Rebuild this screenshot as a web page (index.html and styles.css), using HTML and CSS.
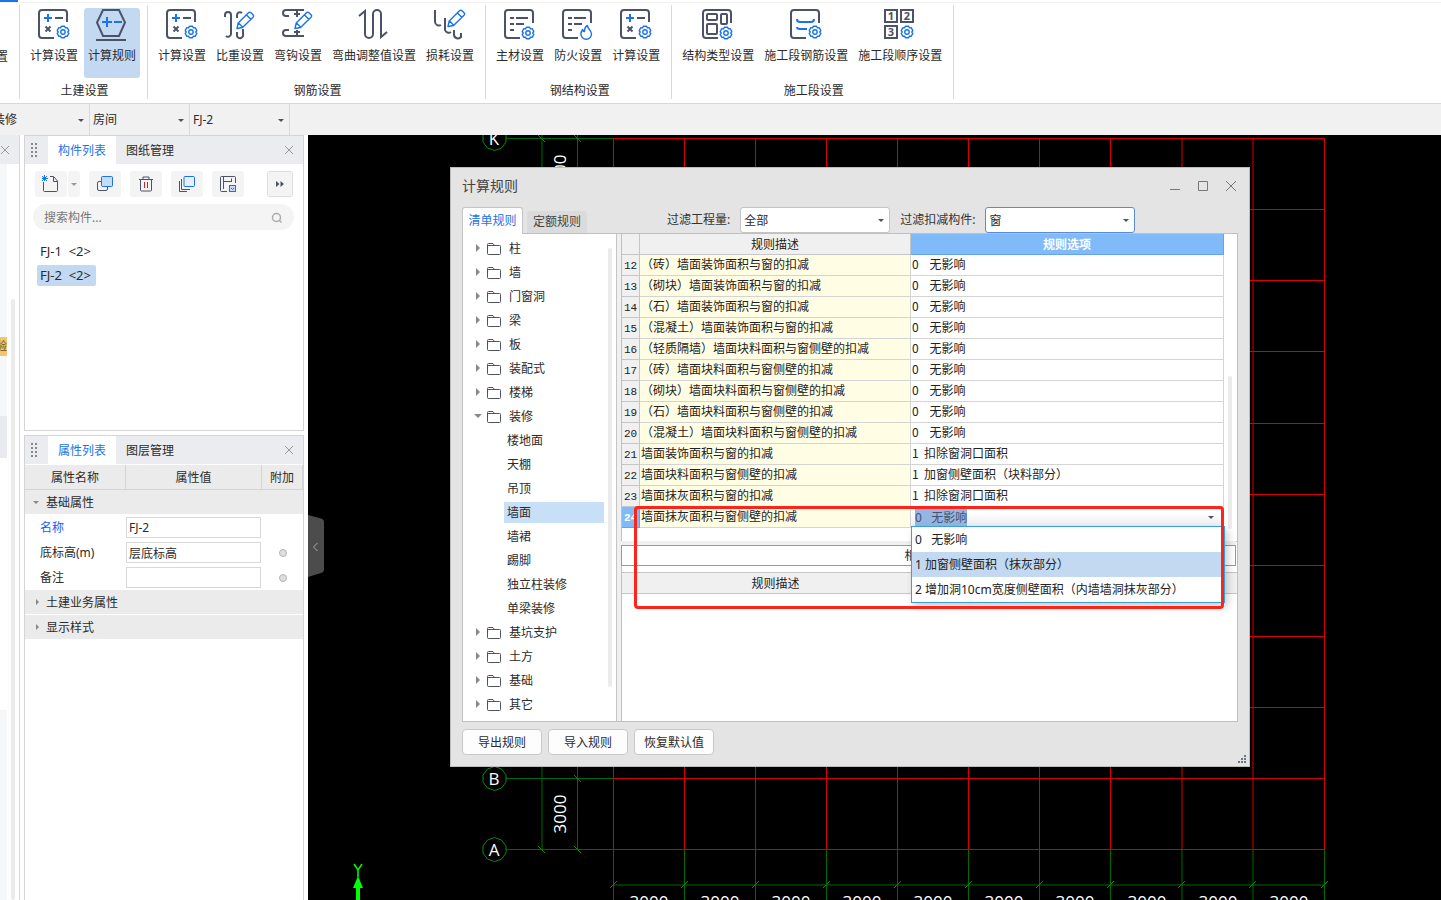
FILE: index.html
```html
<!DOCTYPE html>
<html lang="zh-CN">
<head>
<meta charset="utf-8">
<title>计算规则</title>
<link rel="stylesheet" href="styles.css">
</head>
<body>
<svg class="defs" aria-hidden="true">
  <symbol id="gear" viewBox="-7 -7 14 14"><path d="M-1.6-5.8H1.6L2.4-4.1 4.3-4.2 5.8-1.5 4.8 0 5.8 1.5 4.3 4.2 2.4 4.1 1.6 5.8H-1.6L-2.4 4.1-4.3 4.2-5.8 1.5-4.8 0-5.8-1.5-4.3-4.2-2.4-4.1Z"/><circle r="2.2"/></symbol>
  <symbol id="pencil" viewBox="0 0 19 19"><path d="M1 17.5L2.2 12 12.5 1.8a1.8 1.8 0 0 1 2.5 0L17 3.800a1.800 1.800 0 0 1 0 2.500L6.500 16.500ZM10.500 4l4.300 4.300M2.500 12l4 4"/></symbol>
  <symbol id="calc" viewBox="0 0 32 32"><path class="ink" d="M29 13V4a3 3 0 0 0-3-3H4a3 3 0 0 0-3 3v22a3 3 0 0 0 3 3h12M17 9h8M7.500 17.500l5 5M12.500 17.500l-5 5"/><path class="blue" d="M6 9h8M10 5v8"/><use class="thin" href="#gear" x="18" y="16" width="14" height="14"/></symbol>
  <symbol id="folder" viewBox="0 0 16 14"><path d="M1.500 11.500v-9a1 1 0 0 1 1-1h4.500l1.500 2h5a1 1 0 0 1 1 1v7a1 1 0 0 1-1 1h-11a1 1 0 0 1-1-1zM1.500 3.500H9"/></symbol>
  <symbol id="cross" viewBox="0 0 10 10"><path d="M1 1l8 8M9 1L1 9"/></symbol>
  <symbol id="grip" viewBox="0 0 6 14"><path d="M0 0h2v2H0zM4 0h2v2H4zM0 4h2v2H0zM4 4h2v2H4zM0 8h2v2H0zM4 8h2v2H4zM0 12h2v2H0zM4 12h2v2H4z"/></symbol>
</svg>

<header class="ribbon">
  <section class="group group-cut"><span class="cut-label">置</span></section>
  <section class="group">
    <div class="tools">
      <button class="tool"><svg viewBox="0 0 32 32"><use href="#calc"/></svg>计算设置</button>
      <button class="tool active"><svg viewBox="0 0 32 32"><path class="ink" d="M7 1h16l6 12.500L23 27H7L1 13.500zM0 31h30"/><path class="blue" d="M6 13h10M11 8v10M18 13h8"/></svg>计算规则</button>
    </div>
    <h2>土建设置</h2>
  </section>
  <section class="group">
    <div class="tools">
      <button class="tool"><svg viewBox="0 0 32 32"><use href="#calc"/></svg>计算设置</button>
      <button class="tool"><svg viewBox="0 0 32 32"><path class="ink" d="M1 8V6a3 3 0 0 1 6 0v19a3 3 0 0 1-5 2M13 9V6a3 3 0 0 1 5-2M19 20v5a3 3 0 0 1-6 2v-4"/><use class="thin" href="#pencil" x="12" y="2" width="19" height="19"/></svg>比重设置</button>
      <button class="tool"><svg viewBox="0 0 32 32"><path class="ink" d="M22 1H4a3 3 0 0 0-3 3 3 3 0 0 0 3 3h3M7 21H4a3 3 0 0 0 0 6h18M15 2v6M12 5h6M15 21v5M12 23h6"/><use class="thin" href="#pencil" x="12" y="2" width="19" height="19"/></svg>弯钩设置</button>
      <button class="tool"><svg viewBox="0 0 32 32"><path class="ink" d="M1 7l6-5v23a4 4 0 0 0 8 0V5a4 4 0 0 1 8 0v23l6-5"/></svg>弯曲调整值设置</button>
      <button class="tool"><svg viewBox="0 0 32 32"><path class="ink" d="M1 1v12a4 4 0 0 0 6 3M11 9v12a4 4 0 0 0 6 2M20 21v5a4 4 0 0 0 7 2v-4"/><use class="thin" href="#pencil" x="13" y="0" width="19" height="19"/></svg>损耗设置</button>
    </div>
    <h2>钢筋设置</h2>
  </section>
  <section class="group">
    <div class="tools">
      <button class="tool"><svg viewBox="0 0 32 32"><path class="ink" d="M29 14V4a3 3 0 0 0-3-3H4a3 3 0 0 0-3 3v22a3 3 0 0 0 3 3h12M6 9h4M12 9h12M6 15h4M12 15h8M6 21h4"/><use class="thin" href="#gear" x="17" y="17" width="14" height="14"/></svg>主材设置</button>
      <button class="tool"><svg viewBox="0 0 32 32"><path class="ink" d="M29 14V4a3 3 0 0 0-3-3H4a3 3 0 0 0-3 3v22a3 3 0 0 0 3 3h12M6 9h4M12 9h12M6 15h4M12 15h8M6 21h4"/><path class="thin" d="M25.500 16.500c-.5 3 4 4.500 4 8.500a5.300 5.300 0 0 1-10.600 0c0-2 1-3.500 1.700-4.500.3 1.500 1 2 1.900 2 0-3 1-5 3-6z"/></svg>防火设置</button>
      <button class="tool"><svg viewBox="0 0 32 32"><use href="#calc"/></svg>计算设置</button>
    </div>
    <h2>钢结构设置</h2>
  </section>
  <section class="group">
    <div class="tools">
      <button class="tool"><svg viewBox="0 0 32 32"><path class="ink" d="M29 14V4a3 3 0 0 0-3-3H4a3 3 0 0 0-3 3v22a3 3 0 0 0 3 3h12M6 5h8a1 1 0 0 1 1 1v4a1 1 0 0 1-1 1H6a1 1 0 0 1-1-1V6a1 1 0 0 1 1-1zM20 5h4a1 1 0 0 1 1 1v8a1 1 0 0 1-1 1h-4a1 1 0 0 1-1-1V6a1 1 0 0 1 1-1zM6 15h8a1 1 0 0 1 1 1v8a1 1 0 0 1-1 1H6a1 1 0 0 1-1-1v-8a1 1 0 0 1 1-1z"/><use class="thin" href="#gear" x="17" y="17" width="14" height="14"/></svg>结构类型设置</button>
      <button class="tool"><svg viewBox="0 0 32 32"><path class="ink" d="M29 14V4a3 3 0 0 0-3-3H4a3 3 0 0 0-3 3v22a3 3 0 0 0 3 3h12"/><path class="blue" d="M7 10q0 3 3 3h11q3 0 3-3M7 18q0 2 3 2h7"/><use class="thin" href="#gear" x="18" y="16" width="14" height="14"/></svg>施工段钢筋设置</button>
      <button class="tool"><svg viewBox="0 0 32 32"><path class="ink" d="M1 1h12v12H1zM17 1h12v12H17zM1 17h12v12H1z"/><text x="7" y="11">1</text><text x="23" y="11">2</text><text x="7" y="27">3</text><use class="thin" href="#gear" x="16" y="16" width="14" height="14"/></svg>施工段顺序设置</button>
    </div>
    <h2>施工段设置</h2>
  </section>
</header>

<nav class="scope-bar">
  <label class="combo"><select aria-label="构件大类"><option>装修</option></select></label>
  <label class="combo"><select aria-label="构件类型"><option>房间</option></select></label>
  <label class="combo"><select aria-label="构件"><option>FJ-2</option></select></label>
</nav>

<main class="workspace">
  <aside class="nav-strip">
    <div class="strip-head"><svg class="cross"><use href="#cross"/></svg></div>
    <div class="strip-body">
      <div class="strip-col"><span class="strip-badge">验</span><span class="strip-band"></span><span class="strip-blank"></span></div>
      <div class="strip-scroll"></div>
    </div>
  </aside>

  <div class="panels">
    <section class="panel list-panel">
      <div class="panel-head">
        <svg class="grip"><use href="#grip"/></svg>
        <button class="tab on">构件列表</button><button class="tab">图纸管理</button>
        <button class="close" aria-label="关闭"><svg class="cross"><use href="#cross"/></svg></button>
      </div>
      <div class="toolbar">
        <div class="split">
          <button aria-label="新建"><svg viewBox="0 0 18 18"><path class="ink" d="M1.500 7v8.500a1 1 0 0 0 1 1h12a1 1 0 0 0 1-1V6l-4-4.500H8M11.500 2v4.500H15"/><path class="blue" d="M0 1l5 5M5 1L0 6M2.500 0v6M0 3.500h6"/></svg></button>
          <button class="drop" aria-label="更多新建"></button>
        </div>
        <button aria-label="复制"><svg viewBox="0 0 18 18"><path class="ink" d="M5 6.500H3a1.500 1.500 0 0 0-1.500 1.500v6A1.500 1.500 0 0 0 3 15.500h7a1.500 1.500 0 0 0 1.500-1.500v-2"/><rect class="fill" x="5.500" y="1.500" width="11" height="10" rx="1"/></svg></button>
        <button aria-label="删除"><svg viewBox="0 0 18 18"><path class="ink" d="M2 4.500h14M6 4V2h6v2M3.500 5v10a1 1 0 0 0 1 1h9a1 1 0 0 0 1-1V5"/><path class="red" d="M7.500 7v6M10.500 7v6"/></svg></button>
        <button aria-label="层间复制"><svg viewBox="0 0 18 18"><path class="ink" d="M3.500 4v10.500H12M1.500 6v10.500H9"/><rect class="fill pale" x="6" y="1.500" width="10.500" height="10" rx="1"/></svg></button>
        <button aria-label="存档"><svg viewBox="0 0 18 18"><path class="ink" d="M16.500 8V2.500a1 1 0 0 0-1-1h-13a1 1 0 0 0-1 1v13a1 1 0 0 0 1 1H8M4.500 2v12M4.500 6.500H13M12.500 3.500V7"/><rect class="fill" x="10.500" y="10.500" width="6" height="6"/><path class="blue" d="M12 13l1.500 1.500L15 13"/></svg></button>
        <button class="more" aria-label="更多"><svg viewBox="0 0 10 8"><path d="M1 1l3.500 3L1 7zM5.500 1L9 4 5.500 7z"/></svg></button>
      </div>
      <label class="search"><input type="text" placeholder="搜索构件..."><svg viewBox="0 0 12 12"><circle cx="5.500" cy="5.500" r="4"/><path d="M8.500 8.500l2 2"/></svg></label>
      <ul class="items"><li>FJ-1 &nbsp;&lt;2&gt;</li><li class="on">FJ-2 &nbsp;&lt;2&gt;</li></ul>
    </section>

    <section class="panel prop-panel">
      <div class="panel-head">
        <svg class="grip"><use href="#grip"/></svg>
        <button class="tab on">属性列表</button><button class="tab">图层管理</button>
        <button class="close" aria-label="关闭"><svg class="cross"><use href="#cross"/></svg></button>
      </div>
      <table class="props">
        <thead><tr><th class="c-name">属性名称</th><th>属性值</th><th class="c-add">附加</th></tr></thead>
        <tbody>
          <tr class="sec open"><td colspan="3">基础属性</td></tr>
          <tr><td><label class="key" for="p-name">名称</label></td><td><input id="p-name" type="text" value="FJ-2"></td><td></td></tr>
          <tr><td><label for="p-elev">底标高(m)</label></td><td><input id="p-elev" type="text" value="层底标高"></td><td><input type="radio" aria-label="附加底标高"></td></tr>
          <tr><td><label for="p-note">备注</label></td><td><input id="p-note" type="text"></td><td><input type="radio" aria-label="附加备注"></td></tr>
          <tr class="sec"><td colspan="3">土建业务属性</td></tr>
          <tr class="sec"><td colspan="3">显示样式</td></tr>
        </tbody>
      </table>
    </section>
  </div>

  <div class="canvas">
    <svg class="drawing" aria-label="轴网">
      <g transform="translate(-308 -135)">
        <path class="axis-green" d="M506 138.500H613M506 778.500H613M506 849.500H613M542 135V849M577.500 135V849M613 885H1325M613.500 849V900M684.500 849V900M755.500 849V900M826.500 849V900M897.500 849V900M968.500 849V900M1039.500 849V900M1110.500 849V900M1182 849V900M1253 849V900M1324.500 849V900"/>
        <path class="axis-red" d="M613 138.500H1325M613 209.500H1325M613 280.500H1325M613 351.500H1325M613 423.500H1325M613 494.500H1325M613 565.500H1325M613 636.500H1325M613 707.500H1325M613 778.500H1325M613 849.500H1325M613.500 138V850M684.500 138V850M755.500 138V850M826.500 138V850M897.500 138V850M968.500 138V850M1039.500 138V850M1110.500 138V850M1182 138V850M1253 138V850M1324.500 138V850"/>
        <path class="tick" d="M538 135l7 7M574 135l7 7M574 775l7 7M538 846l7 7M574 846l7 7M610 888l7-7M681 888l7-7M752 888l7-7M823 888l7-7M894 888l7-7M965 888l7-7M1036 888l7-7M1107 888l7-7M1178 888l7-7M1249 888l7-7M1321 888l7-7"/>
        <g class="bubble">
          <path d="M494.500 126.500l7 2.500 4.500 6v7l-4.500 6-7 2.500-7-2.500-4.500-6v-7l4.500-6zM494.500 766.500l7 2.500 4.500 6v7l-4.500 6-7 2.500-7-2.500-4.500-6v-7l4.500-6zM494.500 837.500l7 2.500 4.500 6v7l-4.500 6-7 2.500-7-2.500-4.500-6v-7l4.500-6z"/>
        </g>
        <g class="dims">
          <text x="494" y="145">K</text><text x="494" y="785">B</text><text x="494" y="856">A</text>
          <text transform="translate(566 174) rotate(-90)">3000</text>
          <text transform="translate(566 814) rotate(-90)">3000</text>
          <text x="649" y="908">3000</text><text x="720" y="908">3000</text><text x="791" y="908">3000</text><text x="862" y="908">3000</text><text x="933" y="908">3000</text><text x="1004" y="908">3000</text><text x="1075" y="908">3000</text><text x="1147" y="908">3000</text><text x="1218" y="908">3000</text><text x="1289" y="908">3000</text>
        </g>
        <path class="ucs" d="M358 876l5 12h-3v12h-4v-12h-3z"/>
        <path class="ucs-y" d="M354 864l4 6 4-6M358 870v7"/>
      </g>
    </svg>
    <button class="collapse" aria-label="收起"><svg viewBox="0 0 16 62"><path class="bg" d="M0 0l13 3.500a4 4 0 0 1 3 4V54a4 4 0 0 1-3 4L0 62z"/><path class="chev" d="M9.500 28L5.500 32l4 4"/></svg></button>

    <section class="dialog" role="dialog" aria-label="计算规则">
      <div class="title-bar">
        <h1>计算规则</h1>
        <button aria-label="最小化"><svg viewBox="0 0 12 12"><path d="M1 9.500h10"/></svg></button>
        <button aria-label="最大化"><svg viewBox="0 0 12 12"><path d="M1.500 1.500h9v9h-9z"/></svg></button>
        <button aria-label="关闭"><svg viewBox="0 0 12 12"><path d="M1 1l10 10M11 1L1 11"/></svg></button>
      </div>
      <div class="filter-row">
        <button class="dtab on">清单规则</button><button class="dtab">定额规则</button>
        <label class="f-label first" for="f-qty">过滤工程量:</label>
        <span class="field"><select id="f-qty"><option>全部</option></select></span>
        <label class="f-label" for="f-part">过滤扣减构件:</label>
        <span class="field focus"><select id="f-part"><option>窗</option></select></span>
      </div>
      <div class="frame">
        <div class="tree">
          <ul>
            <li><svg><use href="#folder"/></svg>柱</li>
            <li><svg><use href="#folder"/></svg>墙</li>
            <li><svg><use href="#folder"/></svg>门窗洞</li>
            <li><svg><use href="#folder"/></svg>梁</li>
            <li><svg><use href="#folder"/></svg>板</li>
            <li><svg><use href="#folder"/></svg>装配式</li>
            <li><svg><use href="#folder"/></svg>楼梯</li>
            <li class="open"><svg><use href="#folder"/></svg>装修</li>
            <li class="leaf"><span>楼地面</span></li>
            <li class="leaf"><span>天棚</span></li>
            <li class="leaf"><span>吊顶</span></li>
            <li class="leaf on"><span>墙面</span></li>
            <li class="leaf"><span>墙裙</span></li>
            <li class="leaf"><span>踢脚</span></li>
            <li class="leaf"><span>独立柱装修</span></li>
            <li class="leaf"><span>单梁装修</span></li>
            <li><svg><use href="#folder"/></svg>基坑支护</li>
            <li><svg><use href="#folder"/></svg>土方</li>
            <li><svg><use href="#folder"/></svg>基础</li>
            <li><svg><use href="#folder"/></svg>其它</li>
          </ul>
          <div class="thumb"></div>
        </div>
        <div class="rules">
          <div class="grid-wrap">
            <table class="grid">
              <thead><tr><th class="c-no"></th><th class="c-desc">规则描述</th><th class="sel">规则选项</th></tr></thead>
              <tbody>
                <tr><th>12</th><td>（砖）墙面装饰面积与窗的扣减</td><td>0&nbsp;&nbsp;&nbsp;&nbsp;无影响</td></tr>
                <tr><th>13</th><td>（砌块）墙面装饰面积与窗的扣减</td><td>0&nbsp;&nbsp;&nbsp;&nbsp;无影响</td></tr>
                <tr><th>14</th><td>（石）墙面装饰面积与窗的扣减</td><td>0&nbsp;&nbsp;&nbsp;&nbsp;无影响</td></tr>
                <tr><th>15</th><td>（混凝土）墙面装饰面积与窗的扣减</td><td>0&nbsp;&nbsp;&nbsp;&nbsp;无影响</td></tr>
                <tr><th>16</th><td>（轻质隔墙）墙面块料面积与窗侧壁的扣减</td><td>0&nbsp;&nbsp;&nbsp;&nbsp;无影响</td></tr>
                <tr><th>17</th><td>（砖）墙面块料面积与窗侧壁的扣减</td><td>0&nbsp;&nbsp;&nbsp;&nbsp;无影响</td></tr>
                <tr><th>18</th><td>（砌块）墙面块料面积与窗侧壁的扣减</td><td>0&nbsp;&nbsp;&nbsp;&nbsp;无影响</td></tr>
                <tr><th>19</th><td>（石）墙面块料面积与窗侧壁的扣减</td><td>0&nbsp;&nbsp;&nbsp;&nbsp;无影响</td></tr>
                <tr><th>20</th><td>（混凝土）墙面块料面积与窗侧壁的扣减</td><td>0&nbsp;&nbsp;&nbsp;&nbsp;无影响</td></tr>
                <tr><th>21</th><td>墙面装饰面积与窗的扣减</td><td>1&nbsp;&nbsp;扣除窗洞口面积</td></tr>
                <tr><th>22</th><td>墙面块料面积与窗侧壁的扣减</td><td>1&nbsp;&nbsp;加窗侧壁面积（块料部分）</td></tr>
                <tr><th>23</th><td>墙面抹灰面积与窗的扣减</td><td>1&nbsp;&nbsp;扣除窗洞口面积</td></tr>
                <tr><th class="sel">24</th><td>墙面抹灰面积与窗侧壁的扣减</td><td class="edit">
                  <button class="editor" role="combobox" aria-expanded="true" aria-controls="choices"><span>0&nbsp;&nbsp;&nbsp;无影响</span></button>
                  <ul class="choices" id="choices" role="listbox">
                    <li role="option">0&nbsp;&nbsp;&nbsp;无影响</li>
                    <li role="option" aria-selected="true">1 加窗侧壁面积（抹灰部分）</li>
                    <li role="option">2 增加洞10cm宽度侧壁面积（内墙墙洞抹灰部分）</li>
                  </ul></td></tr>
              </tbody>
            </table>
            <div class="thumb"></div>
          </div>
          <div class="related">相关规则</div>
          <table class="grid lower">
            <thead><tr><th class="c-no"></th><th class="c-desc">规则描述</th><th></th></tr></thead>
          </table>
        </div>
      </div>
      <div class="actions">
        <button>导出规则</button><button>导入规则</button><button>恢复默认值</button>
        <svg class="resize" viewBox="0 0 8 8"><path d="M6 0h2v2H6zM3 3h2v2H3zM6 3h2v2H6zM0 6h2v2H0zM3 6h2v2H3zM6 6h2v2H6z"/></svg>
      </div>
      <div class="callout"></div>
    </section>
  </div>
</main>
</body>
</html>
```

FILE: styles.css
```css
* { box-sizing: border-box; }

body {
  margin: 0;
  height: 100vh;
  display: flex;
  flex-direction: column;
  overflow: hidden;
  background: #fff;
  color: #2b2b2b;
  font: 12px/18px "Noto Sans", "Noto Sans CJK SC", sans-serif;
}

button, input, select {
  font: inherit;
  color: inherit;
  border: 0;
  background: none;
  padding: 0;
  margin: 0;
  border-radius: 0;
  appearance: none;
  outline: none;
}

ul { list-style: none; margin: 0; padding: 0; }
h1, h2 { margin: 0; font-weight: normal; }
svg { fill: none; flex: none; display: block; }
table { border-collapse: separate; border-spacing: 0; table-layout: fixed; }
th { font-weight: normal; }
.defs { position: absolute; width: 0; height: 0; }
.cross { width: 10px; height: 10px; stroke: #999; }

/* Ribbon */
.ribbon {
  position: relative;
  display: flex;
  height: 104px;
  flex: none;
  padding: 5px 0 4px;
  border-bottom: 1px solid #d8d8d8;
  font-family: "Noto Sans CJK SC", sans-serif;
}
.ribbon::before {
  content: "";
  position: absolute;
  inset: 0 0 auto;
  height: 3px;
  background: linear-gradient(to right, #1a73e8 18px, transparent 18px) 0 0 / 100% 2px no-repeat, linear-gradient(#f2f2f2, #f2f2f2) 0 2px / 100% 1px no-repeat;
}
.group {
  display: flex;
  flex-direction: column;
  align-items: center;
  padding: 3px 7px 0 6px;
  border-right: 1px solid #d8d8d8;
}
.group-cut { width: 20px; padding: 42px 0 0; align-items: flex-start; }
.cut-label { width: 8px; direction: rtl; overflow: hidden; white-space: nowrap; }
.tools { display: flex; gap: 2px; height: 74px; }
.tool {
  display: flex;
  flex-direction: column;
  align-items: center;
  gap: 5px;
  height: 70px;
  padding: 1px 4px 0;
  border-radius: 3px;
  white-space: nowrap;
}
.tool.active { background: #c2d9f1; }
.tool svg { width: 32px; height: 32px; }
.ink { stroke: #4d5366; stroke-width: 2; }
.blue { stroke: #1a73e8; stroke-width: 2; }
.thin { stroke: #1a73e8; stroke-width: 1.400; stroke-linejoin: round; }
.tool text { fill: #4d5366; font: bold 11px "Noto Sans", sans-serif; text-anchor: middle; }
.group h2 { font-size: 12px; line-height: 18px; padding-left: 3px; }

/* Scope bar */
.scope-bar {
  display: flex;
  flex: none;
  height: 31px;
  margin-left: -10px;
  background: #f1f1f1;
}
.combo { position: relative; width: 100px; border-right: 1px solid #d8d8d8; }
.combo select { width: 100%; height: 100%; padding: 0 3px; }
.combo::after, .field::after, .editor::after {
  content: "";
  position: absolute;
  right: 5px;
  top: 50%;
  margin-top: -1px;
  border: 3px solid transparent;
  border-top-color: #4d5366;
  border-bottom: 0;
  pointer-events: none;
}

/* Workspace */
.workspace { display: flex; flex: 1; min-height: 0; }
.nav-strip {
  width: 20px;
  flex: none;
  display: flex;
  flex-direction: column;
  border-right: 1px solid #d8d8d8;
}
.strip-head { height: 29px; padding-top: 10px; background: #ebecef; }
.strip-body { display: flex; flex: 1; gap: 4px; min-height: 0; }
.strip-col { display: flex; flex-direction: column; width: 7px; background: #f6f7f9; padding-top: 173px; }
.strip-badge { height: 19px; overflow: hidden; direction: rtl; background: #f2c46d; color: #6b4a10; font-size: 11px; white-space: nowrap; }
.strip-band { height: 42px; margin-top: 60px; background: #e9eaef; }
.strip-blank { height: 252px; background: #fff; }
.strip-scroll { width: 4px; margin-top: 135px; border-radius: 2px; background: #ebebeb; }

.panels { width: 280px; flex: none; margin: 0 4px; display: flex; flex-direction: column; gap: 4px; }
.panel { border: 1px solid #d4d4d4; background: #fff; }
.list-panel { height: 296px; flex: none; }
.prop-panel { flex: 1; border-bottom: 0; }
.panel-head { display: flex; align-items: stretch; height: 28px; background: #ebecef; }
.grip { width: 6px; height: 14px; margin: 7px 11px 0 6px; fill: #888; }
.tab { width: 68px; padding-top: 2px; white-space: nowrap; }
.tab.on { background: #fff; color: #1a73e8; }
.close { margin-left: auto; padding: 0 9px; }

.toolbar { display: flex; gap: 9px; padding: 7px 10px; }
.toolbar button { width: 32px; height: 26px; border-radius: 3px; background: #f4f4f4; display: flex; align-items: center; justify-content: center; }
.toolbar svg { width: 18px; height: 18px; }
.toolbar .ink, .toolbar .blue { stroke-width: 1; }
.toolbar .red { stroke: #e02020; }
.toolbar .fill { fill: #c5dbf7; stroke: #1a73e8; }
.toolbar .pale { fill: #e6f0fd; }
.split { display: flex; gap: 1px; }
.toolbar .drop { width: 12px; }
.drop::after { content: ""; border: 3px solid transparent; border-top-color: #999; border-bottom: 0; }
.toolbar .more { width: 26px; margin-left: auto; border: 1px solid #ddd; }
.toolbar .more svg { width: 10px; height: 8px; fill: #4d5366; }

.search { display: flex; align-items: center; height: 26px; margin: 0 9px 0 8px; padding: 1px 11px 0 11px; border-radius: 13px; background: #f4f4f4; }
.search input { flex: 1; min-width: 0; }
.search input::placeholder { color: #777; }
.search svg { width: 12px; height: 12px; stroke: #aaa; stroke-width: 1.500; }
.items { padding: 11px 12px; display: flex; flex-direction: column; align-items: flex-start; gap: 3px; font-size: 13px; }
.items li { padding: 0 5px 0 3px; line-height: 21px; border-radius: 2px; white-space: pre; }
.items .on { background: #c2d9f1; }

.props { width: 100%; margin-top: 1px; }
.props th { height: 25px; background: #ebebeb; border-right: 1px solid #d4d4d4; border-bottom: 1px solid #d4d4d4; padding: 2px 0 0; }
.c-name { width: 101px; }
.c-add { width: 41px; }
.props td { height: 25px; padding: 0; }
.props td:first-child { padding-left: 15px; }
.props td:last-child { text-align: center; }
.props .sec td { text-align: left; background: #ebebeb; border-bottom: 1px solid #fff; padding: 2px 0 0 7px; }
.sec td::before {
  content: "";
  display: inline-block;
  margin: 0 7px 3px 4px;
  border: 3px solid transparent;
  border-left: 3px solid #888;
  border-right: 0;
  width: 0;
  vertical-align: middle;
}
.sec.open td::before { border: 3px solid transparent; border-top-color: #888; border-bottom: 0; margin: 0 7px 3px 1px; }
.key { color: #1a5cff; }
.props input[type="text"] { display: block; width: 135px; height: 21px; border: 1px solid #d8d8d8; padding: 0 2px; }
.props input[type="radio"] { display: inline-block; width: 8px; height: 8px; border: 1px solid #b5b5b5; border-radius: 50%; background: #dcdee3; vertical-align: middle; }

/* Drawing area */
.canvas { position: relative; flex: 1; background: #000; overflow: hidden; }
.drawing { position: absolute; width: 100%; height: 100%; }
.axis-green { stroke: #006a00; }
.axis-red { stroke: #d80000; }
.tick, .bubble { stroke: #0a8a0a; }
.dims { fill: #fff; font: 17px "Open Sans", sans-serif; text-anchor: middle; }
.ucs { fill: #0f0; }
.ucs-y { stroke: #0f0; stroke-width: 1.500; }
.collapse { position: absolute; left: 0; top: 380px; }
.collapse svg { width: 16px; height: 62px; }
.collapse .bg { fill: #4c4c4c; }
.collapse .chev { stroke: #aaa; }

/* Rule dialog */
.dialog {
  position: absolute;
  left: 142px;
  top: 32px;
  width: 800px;
  height: 600px;
  display: flex;
  flex-direction: column;
  padding: 0 11px;
  background: #e4e4e4;
  border: 1px solid #bdbdbd;
}
.title-bar { display: flex; align-items: center; gap: 16px; height: 39px; flex: none; padding: 0 1px 3px 0; }
.title-bar h1 { flex: 1; font-size: 14px; line-height: 20px; color: #444; }
.title-bar svg { width: 12px; height: 12px; stroke: #777; }

.filter-row { display: flex; align-items: flex-end; height: 26px; flex: none; }
.dtab { width: 60px; height: 22px; background: #dbdbdb; border-radius: 3px 3px 0 0; color: #444; white-space: nowrap; }
.dtab.on { width: 61px; height: 27px; margin: 0 4px -1px 0; z-index: 1; background: #fff; border: 1px solid #c4c4c4; border-bottom: 0; color: #1a73e8; }
.f-label { line-height: 26px; padding-top: 1px; margin: 0 10px; color: #333; white-space: nowrap; }
.f-label.first { margin-left: 80px; }
.field { position: relative; width: 150px; height: 26px; background: #fff; border: 1px solid #c4c4c4; border-radius: 3px; }
.f-label + .focus { border-color: #5b8bd8; }
.field select { width: 100%; height: 100%; padding: 1px 3px 0; }

.frame { display: flex; flex: 1; min-height: 0; gap: 4px; border: 1px solid #c0c0c0; background: #f0f0f0; }
.tree { display: flex; width: 154px; flex: none; background: #fff; border-right: 1px solid #c4c4c4; }
.tree ul { flex: 1; padding-top: 2px; }
.tree li { display: flex; align-items: center; height: 24px; padding: 1px 0 0 13px; white-space: nowrap; }
.tree li::before { content: ""; border: 4px solid transparent; border-left: 4px solid #888; border-right: 0; margin: 0 6px 2px 0; }
.tree li.open::before { border: 4px solid transparent; border-top-color: #888; border-bottom: 0; margin: 0 4px 2px -2px; }
.tree svg { width: 16px; height: 14px; stroke: #4d5366; margin-right: 7px; }
.tree li.leaf { padding: 0 4px 0 41px; }
.tree li.leaf::before { display: none; }
.leaf span { flex: 1; padding-left: 3px; line-height: 21px; }
.leaf.on span { background: #c8dff8; }
.thumb { width: 4px; border-radius: 2px; background: #ebebeb; }
.tree .thumb { margin: 14px 4px 34px 0; }

.rules { flex: 1; min-width: 0; display: flex; flex-direction: column; background: #fff; border-left: 1px solid #c0c0c0; }
.grid-wrap { display: flex; height: 308px; flex: none; border-bottom: 1px solid #c0c0c0; }
.grid-wrap .thumb { margin: 142px 5px 12px 4px; }
.grid { flex: 1; width: 100%; height: 0; font-family: "Noto Sans CJK SC", sans-serif; color: #222; }
.grid th, .grid td { height: 21px; padding: 0; line-height: 18px; border-right: 1px solid #d4d4d4; border-bottom: 1px solid #d4d4d4; text-align: left; white-space: nowrap; }
.grid th { background: #f0f0f0; text-align: center; border-color: #c6c6c6; }
.grid td { padding: 0 0 2px 1px; }
.grid td:nth-child(2) { background: #fffde4; }
.grid tbody th { padding-top: 2px; font: 11px/18px "Liberation Mono", monospace; }
.c-no { width: 18px; }
.c-desc { width: 271px; }
.grid th.sel { background: #80baf8; border-color: #62a5ee; color: #fff; font-weight: bold; }
.grid td.edit { position: relative; padding: 0; }
.editor { position: relative; display: block; width: 100%; height: 20px; padding-left: 4px; text-align: left; background: linear-gradient(#fff 30%, #ebebef); }
.editor span { display: inline-block; height: 18px; background: #93b6e4; color: #48506a; font-family: "Noto Sans", "Noto Sans CJK SC", sans-serif; }
.editor::after { right: 9px; }
.choices {
  position: absolute;
  top: 100%;
  left: 0;
  right: -2px;
  z-index: 2;
  margin-top: -1px;
  background: #fff;
  border: 1px solid #3aa0d8;
  box-shadow: 3px 4px 8px rgba(0, 0, 0, .2);
  font-family: "Noto Sans", "Noto Sans CJK SC", sans-serif;
}
.choices li { line-height: 25px; padding-left: 3px; }
.choices [aria-selected] { background: #c2d9f1; }

.related { height: 21px; margin: 3px 1px 6px -1px; line-height: 19px; border: 1px solid #999; text-align: center; flex: none; box-shadow: 0 -4px #f0f0f0; }
.grid.lower { flex: none; border-top: 1px solid #c6c6c6; }
.grid.lower th { border-right: 0; }

.actions { position: relative; display: flex; gap: 6px; padding: 7px 0 11px; flex: none; }
.actions button { width: 80px; height: 26px; padding-top: 1px; background: #fdfdfd; border: 1px solid #c8c8c8; border-radius: 4px; white-space: nowrap; }
.resize { position: absolute; right: -8px; bottom: 3px; width: 8px; height: 8px; fill: #6d7680; }
.callout {
  position: absolute;
  left: 183px;
  top: 338px;
  width: 590px;
  height: 103px;
  z-index: 3;
  border: 3px solid #ff2419;
  border-radius: 4px;
  pointer-events: none;
}
```
